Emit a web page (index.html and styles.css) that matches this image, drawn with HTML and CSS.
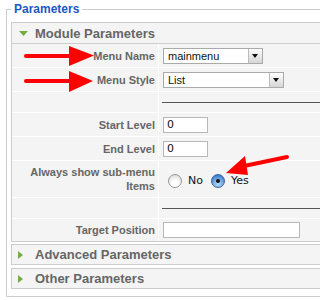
FILE: index.html
```html
<!DOCTYPE html>
<html>

<head>
    <title>Module Parameters</title>
    <link rel="stylesheet" href="styles.css">
</head>

<body>
    <fieldset class="adminform">
        <legend>Parameters</legend>

        <div class="panel panel-open">
            <h3 class="panel-title">
                <svg class="toggle" viewBox="0 0 10 10"><polygon points="1,3 10,3 5.5,8" /></svg>
                Module Parameters
            </h3>
            <div class="params">
                <div class="key">Menu Name</div>
                <div class="value">
                    <div class="select select-name"><span class="select-text">mainmenu</span><span class="select-btn"></span></div>
                </div>

                <div class="key">Menu Style</div>
                <div class="value">
                    <div class="select select-style"><span class="select-text">List</span><span class="select-btn"></span></div>
                </div>

                <div class="key spacer"></div>
                <div class="value spacer"><div class="rule"></div></div>

                <div class="key">Start Level</div>
                <div class="value"><div class="input input-level">0</div></div>

                <div class="key">End Level</div>
                <div class="value"><div class="input input-level">0</div></div>

                <div class="key">Always show sub-menu Items</div>
                <div class="value">
                    <div class="radios">
                        <span class="radio"></span><span class="radio-label">No</span>
                        <span class="radio checked"></span><span class="radio-label">Yes</span>
                    </div>
                </div>

                <div class="key spacer"></div>
                <div class="value spacer"><div class="rule"></div></div>

                <div class="key last">Target Position</div>
                <div class="value last"><div class="input input-target"></div></div>
            </div>
        </div>

        <div class="panel">
            <h3 class="panel-title">
                <svg class="toggle" viewBox="0 0 10 10"><polygon points="0,1 5,5 0,9" /></svg>
                Advanced Parameters
            </h3>
        </div>

        <div class="panel">
            <h3 class="panel-title">
                <svg class="toggle" viewBox="0 0 10 10"><polygon points="0,1 5,5 0,9" /></svg>
                Other Parameters
            </h3>
        </div>
    </fieldset>

    <!-- red call-out arrows drawn over the form -->
    <svg class="callouts" viewBox="0 0 320 300">
        <g fill="#f00" stroke="#f00">
            <line x1="26" y1="56" x2="72" y2="56" stroke-width="4" stroke-linecap="round" />
            <polygon points="69,46 94,55.5 69,66" stroke="none" />
            <line x1="26" y1="81" x2="72" y2="81" stroke-width="4" stroke-linecap="round" />
            <polygon points="69,71 93,81 69,92" stroke="none" />
            <line x1="287" y1="157" x2="244" y2="166" stroke-width="4" stroke-linecap="round" />
            <polygon points="226,173 245,156 248,175" stroke="none" />
        </g>
    </svg>
</body>

</html>
```

FILE: styles.css
```css
html,
body {
    margin: 0;
    padding: 0;
    overflow: hidden;
    background-color: white;
    font-family: "Liberation Sans", Arial, sans-serif;
}

body {
    position: relative;
    width: 320px;
    height: 300px;
}

.adminform {
    width: 360px;
    margin: 0 0 0 6px;
    padding: 4px 4px 4px 4px;
    border: 1px solid #ccc;
}

.adminform legend {
    padding: 0 3px;
    color: #1b57c4;
    font-size: 12px;
    font-weight: bold;
    line-height: 18px;
}

.panel {
    border: 1px solid #ccc;
    background-color: #f4f4f4;
    margin-bottom: 3px;
}

.panel-open {
    margin-bottom: 2px;
}

.panel-title {
    display: flex;
    align-items: center;
    gap: 7px;
    margin: 0;
    padding: 0 0 0 6px;
    height: 19px;
    color: #666;
    font-size: 13px;
    font-weight: bold;
    line-height: 19px;
}

.panel-open .panel-title {
    height: 20px;
}

.toggle {
    width: 10px;
    height: 10px;
    fill: #74ae3f;
}

.params {
    display: grid;
    grid-template-columns: 146px 1fr;
    gap: 1px;
    background-color: white;
    border-top: 1px solid #ccc;
}

.key {
    display: flex;
    align-items: center;
    justify-content: flex-end;
    text-align: right;
    padding: 4px 3px;
    min-height: 15px;
    background-color: #f4f4f4;
    color: #666;
    font-size: 11px;
    font-weight: bold;
    line-height: 14px;
}

.value {
    display: flex;
    align-items: center;
    padding: 4px 4px 3px 4px;
    background-color: #f4f4f4;
    font-family: "DejaVu Sans", sans-serif;
    font-size: 11px;
    color: #111;
}

.key.spacer,
.value.spacer {
    padding: 0;
    min-height: 20px;
}

.value.spacer {
    padding-left: 3px;
}

.rule {
    flex: 1;
    border-top: 1px solid #555;
}

.key.last,
.value.last {
    padding-top: 3px;
    padding-bottom: 3px;
}

.select {
    display: flex;
    box-sizing: border-box;
    height: 16px;
    border: 1px solid #aaa;
    background-color: white;
}

.select-name {
    width: 100px;
}

.select-style {
    width: 121px;
}

.select-text {
    flex: 1;
    padding-left: 4px;
    font-family: "Liberation Sans", sans-serif;
    font-size: 11px;
    line-height: 14px;
}

.select-btn {
    position: relative;
    width: 13px;
    border-left: 1px solid #bbb;
    background: linear-gradient(#fdfdfd, #d6d6d6);
}

.select-btn::after {
    content: "";
    position: absolute;
    left: 3px;
    top: 5px;
    border-left: 3px solid transparent;
    border-right: 3px solid transparent;
    border-top: 4px solid #111;
}

.input {
    box-sizing: border-box;
    height: 16px;
    padding-left: 3px;
    border: 1px solid #b8b8b8;
    background-color: white;
    line-height: 14px;
}

.input-level {
    width: 45px;
}

.input-target {
    width: 137px;
}

.radios {
    display: flex;
    align-items: center;
    margin-top: 2px;
}

.radio {
    box-sizing: border-box;
    width: 14px;
    height: 14px;
    margin-left: 5px;
    border: 1px solid #999;
    border-radius: 50%;
    background: radial-gradient(circle at 50% 70%, #ffffff 30%, #dcdcdc 80%, #c4c4c4);
}

.radio.checked {
    margin-left: 8px;
    position: relative;
    border-color: #3b63a5;
    background: radial-gradient(circle at 50% 75%, #a9d3f8 10%, #5b95dc 60%, #2d63b8);
}

.radio.checked::after {
    content: "";
    position: absolute;
    left: 4px;
    top: 4px;
    width: 4px;
    height: 4px;
    border-radius: 50%;
    background-color: #111;
}

.radio-label {
    margin-left: 6px;
    color: #112;
}

.callouts {
    position: absolute;
    left: 0;
    top: 0;
    width: 320px;
    height: 300px;
    pointer-events: none;
}
```
